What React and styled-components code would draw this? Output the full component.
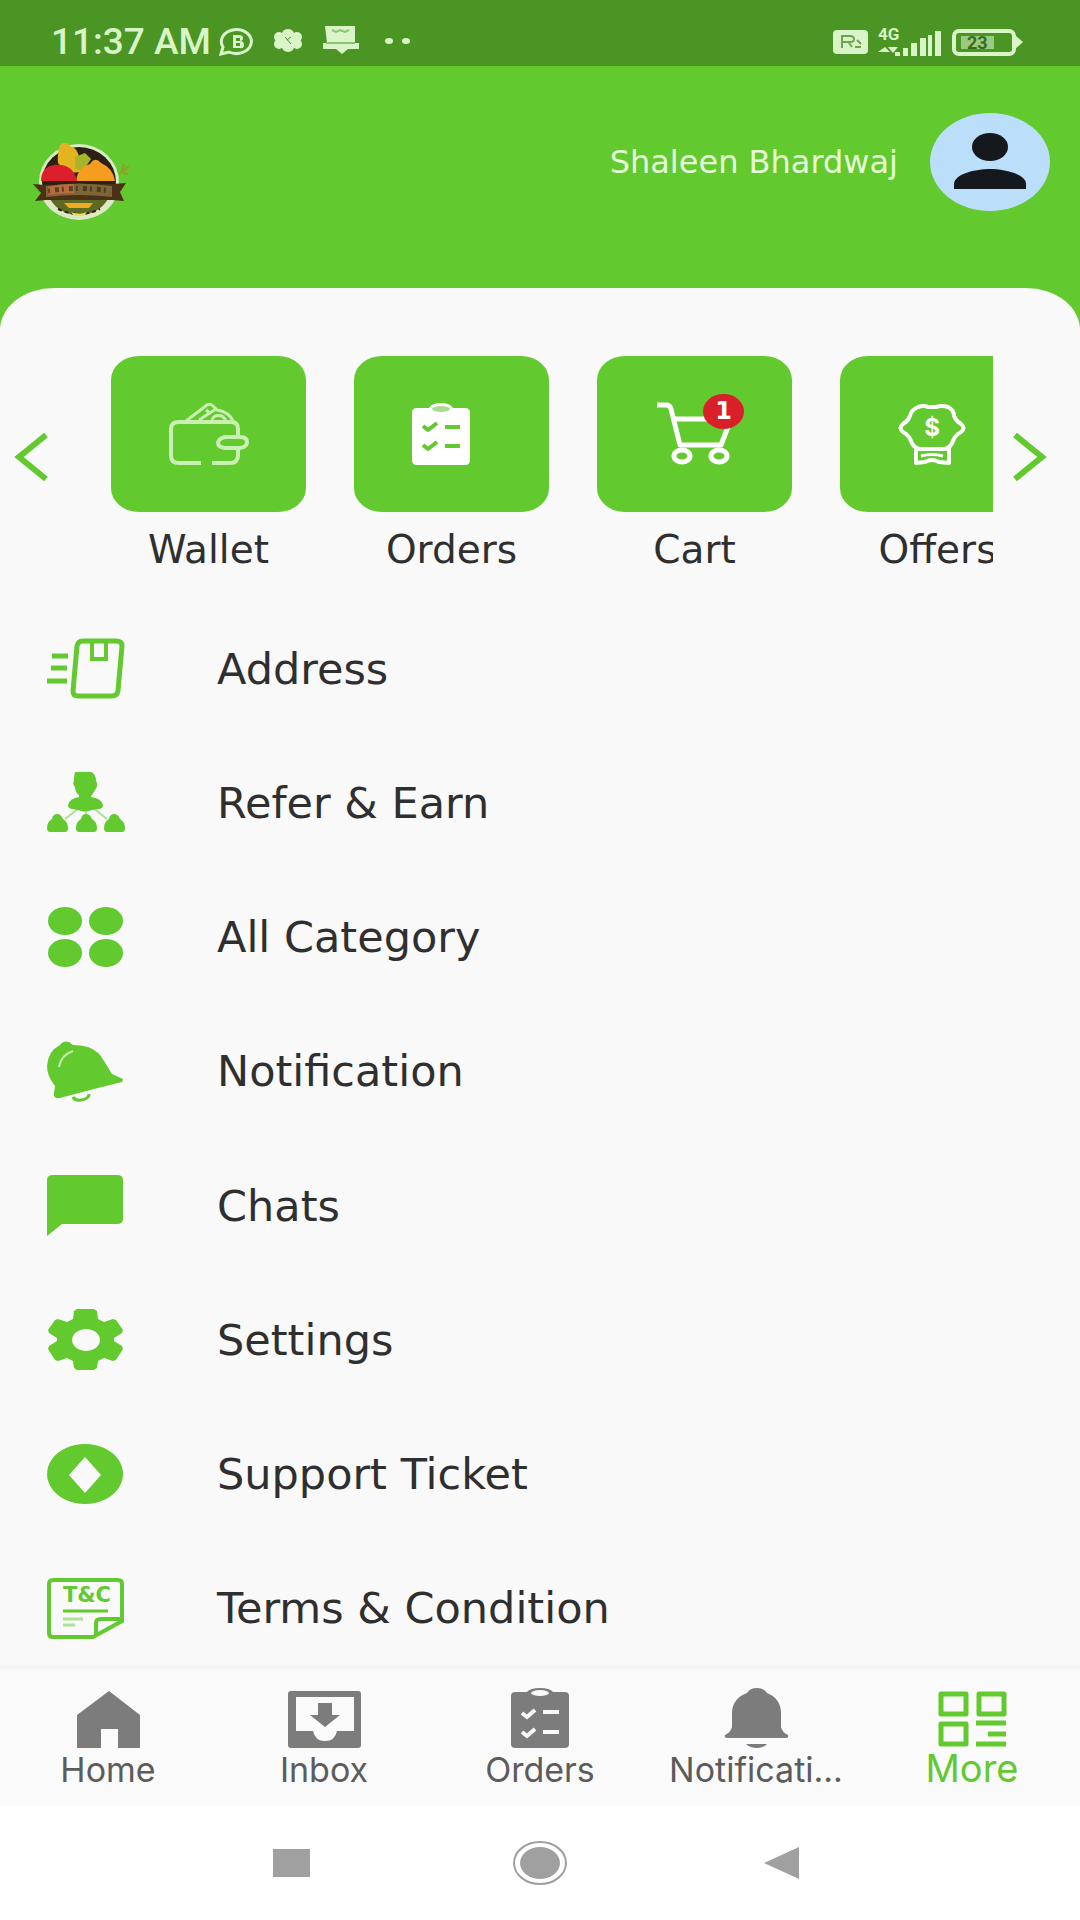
import styled, { createGlobalStyle, ThemeProvider } from 'styled-components';

const theme = {
  color: {
    primary: '#62c92f',
    primaryDark: '#4a9524',
    surface: '#f9f9f9',
    bar: '#fafafa',
    text: '#2f2f2f',
    muted: '#7c7c7c',
    pale: '#d9f5c8',
    badge: '#d9202a',
    avatar: '#bbdefb',
  },
  font: {
    base: "'DejaVu Sans', sans-serif",
    nav: "Inter, sans-serif",
    status: 'Roboto, sans-serif',
  },
};

const GlobalStyle = createGlobalStyle`
  * {
    box-sizing: border-box;
  }
  body {
    margin: 0;
    font-family: ${(props) => props.theme.font.base};
  }
  button {
    border: none;
    background: none;
    padding: 0;
    font: inherit;
    color: inherit;
    cursor: pointer;
  }
  a {
    color: inherit;
    text-decoration: none;
  }
  svg {
    display: block;
    flex: none;
  }
`;

const Page = styled.div`
  display: flex;
  flex-direction: column;
  min-height: 100vh;
  background: ${(props) => props.theme.color.primary};
`;

const StatusBar = styled.div`
  display: flex;
  justify-content: space-between;
  align-items: center;
  height: 66px;
  padding: 18px 56px 0 51px;
  background: ${(props) => props.theme.color.primaryDark};
  color: ${(props) => props.theme.color.pale};
  font-family: ${(props) => props.theme.font.status};
`;

const StatusGroup = styled.div`
  display: flex;
  align-items: center;
  gap: ${(props) => props.$gap}px;
`;

const Clock = styled.time`
  font-size: 37px;
  line-height: 36px;
  font-weight: 500;
`;

const Header = styled.header`
  display: flex;
  justify-content: space-between;
  align-items: flex-start;
  min-height: 222px;
  padding: 47px 30px 65px 33px;
`;

const LogoLink = styled.a`
  align-self: flex-end;
`;

const User = styled.a`
  display: flex;
  align-items: center;
  gap: 32px;
  color: #e6fbd9;
  font-size: 32px;
  line-height: 40px;
`;

const Avatar = styled.span`
  display: block;
  width: 120px;
  height: 98px;
  border-radius: 50%;
  overflow: hidden;
  background: ${(props) => props.theme.color.avatar};
`;

const Sheet = styled.main`
  flex: 1;
  display: flex;
  flex-direction: column;
  padding-top: 68px;
  border-radius: 54px 54px 0 0 / 42px 42px 0 0;
  background: ${(props) => props.theme.color.surface};
`;

const Carousel = styled.section`
  display: flex;
`;

const ArrowButton = styled.button`
  flex: none;
  display: flex;
  align-items: center;
  width: 87px;
  && {
    padding: 0 ${(props) => (props.$side === 'right' ? '20px' : '14px')} 14px;
  }
`;

const Track = styled.div`
  flex: 1;
  min-width: 0;
  display: flex;
  gap: 48px;
  padding-left: 24px;
  overflow: hidden;
`;

const Shortcut = styled.button`
  flex: none;
  display: flex;
  flex-direction: column;
  align-items: center;
  gap: 16px;
  width: 195px;
  && {
    color: ${(props) => props.theme.color.text};
    font-size: 39px;
    line-height: 44px;
  }
`;

const Tile = styled.span`
  position: relative;
  display: flex;
  align-items: center;
  justify-content: center;
  width: 100%;
  height: 156px;
  border-radius: 28px / 24px;
  background: ${(props) => props.theme.color.primary};
`;

const Badge = styled.span`
  position: absolute;
  top: 38px;
  right: 48px;
  width: 41px;
  height: 35px;
  border-radius: 50%;
  background: ${(props) => props.theme.color.badge};
  color: #fff;
  font-size: 24px;
  line-height: 35px;
  font-weight: bold;
  text-align: center;
`;

const Menu = styled.nav`
  flex: 1;
  display: flex;
  flex-direction: column;
  justify-content: space-between;
  gap: 24px;
  padding: 66px 47px 26px;
`;

const MenuItem = styled.a`
  display: flex;
  align-items: center;
  gap: 92px;
  height: 61px;
  color: ${(props) => props.theme.color.text};
  font-size: 43px;
  line-height: 52px;

  svg {
    color: ${(props) => props.theme.color.primary};
  }
`;

const TabBar = styled.nav`
  display: grid;
  grid-template-columns: repeat(5, 1fr);
  padding: 19px 0 14px;
  border-top: 4px solid #f4f4f4;
  background: ${(props) => props.theme.color.bar};
  font-family: ${(props) => props.theme.font.nav};
`;

const Tab = styled.a`
  display: flex;
  flex-direction: column;
  align-items: center;
  color: ${(props) => (props.$active ? props.theme.color.primary : '#5c5c5c')};
  font-size: ${(props) => (props.$active ? 38 : 34)}px;
  line-height: ${(props) => (props.$active ? 40 : 44)}px;

  svg {
    color: ${(props) => (props.$active ? props.theme.color.primary : props.theme.color.muted)};
  }
`;

const SystemBar = styled.div`
  display: flex;
  justify-content: center;
  align-items: center;
  gap: 192px;
  height: 114px;
  background: #fff;
  color: #a0a0a0;
`;

const Logo = () => (
  <svg width="98" height="80" viewBox="0 0 98 80" aria-hidden="true">
    <ellipse cx="46" cy="39" rx="40" ry="38" fill="#d8ecc8" />
    <ellipse cx="46" cy="39" rx="37" ry="35" fill="#2b2013" />
    <path d="M8 52h76c-6 16-20 24-38 24S14 68 8 52z" fill="#dfe8c4" />
    <path d="M17 56h58c-6 10-16 16-29 16S23 66 17 56z" fill="#5d6a20" />
    <path d="M27 2q6-5 10 1 8 2 9 12l3 14-15 1-9-10q-1-10 2-18z" fill="#e3b420" />
    <path d="M42 14l10-4 6 6-8 12-8-2z" fill="#a8b52c" />
    <path d="M43 38q2-14 14-17 5-8 11-1 12 5 14 18z" fill="#f59d1f" />
    <path d="M8 38q0-14 13-16 19-2 23 16z" fill="#dc1f2c" />
    <path d="M0 41l12 1 68-1 13-1-6 9 4 9-12-1H13L2 58l6-8z" fill="#4a3016" />
    <path d="M13 43q32-5 66 0v11q-33-4-66 0z" fill="#7d6538" />
    <path d="M15 44q12-3 26-3v9q-14 0-26 2z" fill="#b96b3f" />
    <path d="M15 48q32-5 62 0" fill="none" stroke="#2c2112" strokeWidth="5" strokeDasharray="2 5 4 3" opacity="0.6" />
    <path d="M31 60h29l-4 5H36z" fill="#efaa22" />
    <path d="M25 66q21 10 42 0" fill="none" stroke="#2c2112" strokeWidth="2" strokeDasharray="4 3" />
    <path d="M38 69q8 3 16 0l-3 4h-10z" fill="#e8dd62" />
    <path d="M86 31l10-8M89 27l2-6M90 30l5 1" stroke="#9a9c25" strokeWidth="2" />
  </svg>
);

const PersonIcon = () => (
  <svg width="120" height="98" viewBox="0 0 120 98" aria-hidden="true">
    <ellipse cx="60" cy="34" rx="18" ry="14" fill="#15191d" />
    <path d="M24 76v-5c0-10 22-15 36-15s36 5 36 15v5z" fill="#15191d" />
  </svg>
);

const StatusIconsLeft = () => (
  <svg width="192" height="32" viewBox="0 0 192 32" fill="currentColor" aria-hidden="true">
    <path d="M2 28l2-7a15 12 0 1 1 6 5z" fill="none" stroke="currentColor" strokeWidth="3" />
    <path d="M14 9h6q4 0 4 3t-3 3q4 0 4 4t-4 3h-7zM17 12v3h4v-3zM17 17v3h4v-3z" />
    <ellipse cx="69" cy="8" rx="6" ry="5" />
    <ellipse cx="69" cy="21" rx="6" ry="5" />
    <ellipse cx="60" cy="11" rx="5" ry="5" />
    <ellipse cx="78" cy="11" rx="5" ry="5" />
    <ellipse cx="60" cy="18" rx="5" ry="5" />
    <ellipse cx="78" cy="18" rx="5" ry="5" />
    <path d="M62 9h14v12H62z" />
    <path d="M66 11l6 7M72 11l-4 3" stroke="#4a9524" strokeWidth="1" />
    <path d="M106 0h30v17h4v6h-11l-6 5-6-5h-13v-6h4z" />
    <path d="M107 17h29M113 4l4 2 4-2 5 2 4-2" fill="none" stroke="#8fc475" strokeWidth="2" />
    <ellipse cx="170" cy="15" rx="4" ry="3" />
    <ellipse cx="187" cy="15" rx="4" ry="3" />
  </svg>
);

const SimIcon = () => (
  <svg width="35" height="26" viewBox="0 0 35 26" aria-hidden="true">
    <rect x="0" y="1" width="35" height="24" rx="4" fill="currentColor" />
    <path d="M9 19V7h8q4 0 4 3t-4 3H9M16 14l3 4M22 18h6M24 11l4 4" fill="none" stroke="#6da350" strokeWidth="2" />
  </svg>
);

const SignalIcon = () => (
  <svg width="64" height="40" viewBox="0 -6 64 40" fill="currentColor" aria-hidden="true">
    <text x="0" y="12" fontFamily="Roboto, sans-serif" fontSize="17" fontWeight="bold">4G</text>
    <path d="M0 24l7-5 5 5zM10 19h10l-5 6z" />
    <path d="M17 24h5v4h-5zM25 20h5v8h-5zM33 15h6v13h-6zM42 10h6v18h-6zM50 7h4v21h-4zM57 3h6v25h-6z" />
  </svg>
);

const BatteryIcon = () => (
  <svg width="72" height="28" viewBox="0 0 72 28" aria-hidden="true">
    <rect x="2" y="3" width="60" height="23" rx="5" fill="none" stroke="currentColor" strokeWidth="4" />
    <path d="M63 7l8 7-8 7z" fill="currentColor" />
    <path d="M9 8h33v13H9z" fill="#9cc983" />
    <text x="15" y="21" fontFamily="Roboto, sans-serif" fontSize="18" fontWeight="bold" fill="#356f18">23</text>
  </svg>
);

const Chevron = ({ d }) => (
  <svg width="34" height="50" viewBox="0 0 34 50" fill="none" stroke="#62c92f" strokeWidth="6" aria-hidden="true">
    <path d={d} />
  </svg>
);

// shortcut icons share one 80x64 canvas
const TileIcon = ({ children }) => (
  <svg width="80" height="64" viewBox="0 0 80 64" fill="none" stroke="#fff" strokeWidth="4" strokeLinejoin="round" aria-hidden="true">
    {children}
  </svg>
);

const WalletIcon = () => (
  <TileIcon>
    <g stroke="#c9f0b2">
      <path d="M69 33V27q0-7-7-7H10q-8 0-8 7v27q0 7 8 7h22M43 61h18q8 0 8-8v-7" />
      <path d="M56 35h15q7 0 7 5t-7 6H56q-7-1-7-5t7-6z" />
      <path d="M17 19L38 3q3-2 6 1l4 4q12 2 16 11M30 18L47 7M43 18q2-6 10-4l4 4M37 8l5 4" strokeWidth="3" />
    </g>
  </TileIcon>
);

const OrdersIcon = () => (
  <TileIcon>
    <path d="M5 6h12q3-5 12-5t12 5h12q5 0 5 5v47q0 5-5 5H5q-5 0-5-5V11q0-5 5-5z" fill="#fff" stroke="none" />
    <ellipse cx="29" cy="7" rx="9" ry="3" fill="#a8dd8b" stroke="none" />
    <path d="M11 24l5 4 9-7M11 43l5 4 9-7M33 25h15M33 44h15" stroke="#62c92f" />
  </TileIcon>
);

const CartIcon = () => (
  <TileIcon>
    <path d="M2 3h9q4 0 5 4l9 36h41l10-26H19" strokeWidth="5" />
    <ellipse cx="27" cy="54" rx="8" ry="6" strokeWidth="5" />
    <ellipse cx="64" cy="54" rx="8" ry="6" strokeWidth="5" />
  </TileIcon>
);

const OffersIcon = () => (
  <TileIcon>
    <path d="M20 5q6-2 10 0h8q6-2 12 0 6 3 6 9 2 5 7 8 5 4 0 8-6 3-8 9-2 6-8 8H21q-6-2-8-8-2-6-8-9-5-4 0-8 5-3 7-8 1-6 8-9z" />
    <path d="M18 46v15l9-1q7-4 14 0l10 1V46" />
    <path d="M23 54q11-3 22 0" strokeWidth="3" />
    <text x="34" y="34" fill="#fff" stroke="none" fontFamily="Inter, sans-serif" fontSize="24" fontWeight="bold" textAnchor="middle">$</text>
  </TileIcon>
);

const MenuIcon = ({ children }) => (
  <svg width="78" height="61" viewBox="0 0 78 61" fill="currentColor" aria-hidden="true">
    {children}
  </svg>
);

const AddressIcon = () => (
  <MenuIcon>
    <g fill="none" stroke="currentColor" strokeWidth="5">
      <path d="M36 3h33q6 0 6 5l-4 45q-1 5-6 5H31q-5 0-5-5l4-45q1-5 6-5z" />
      <path d="M45 4v17h14V4" strokeWidth="4" />
      <path d="M5 18h16M4 30h16M0 43h20" />
    </g>
  </MenuIcon>
);

const ReferIcon = () => (
  <MenuIcon>
    <path d="M28 0h16q5 2 5 9 3 4-1 9-2 4-4 6v1q10 1 12 8 0 4-5 4l-6 1q-7 3-14 0l-5-1q-5 0-5-4 2-7 11-8v-2q-4-3-4-8-3-3-1-6 0-6 1-9z" />
    <path d="M32 36L18 47M39 36v9M46 36l14 11" fill="none" stroke="currentColor" strokeWidth="2" opacity="0.5" />
    <path d="M10 42q4 0 6 5 5 3 5 9 0 4-3 4H3q-3 0-3-4 0-6 5-9 1-5 5-5zM39 42q4 0 6 5 5 3 5 9 0 4-3 4H32q-3 0-3-4 0-6 5-9 1-5 5-5zM67 42q4 0 6 5 5 3 5 9 0 4-3 4H60q-3 0-3-4 0-6 5-9 1-5 5-5z" />
  </MenuIcon>
);

const CategoryIcon = () => (
  <MenuIcon>
    <ellipse cx="18" cy="14" rx="17" ry="14" />
    <ellipse cx="59" cy="14" rx="17" ry="14" />
    <ellipse cx="18" cy="46" rx="17" ry="14" />
    <ellipse cx="59" cy="46" rx="17" ry="14" />
  </MenuIcon>
);

const NotificationIcon = () => (
  <MenuIcon>
    <path d="M13 4q3-5 9-3l4 3q8 0 15 2 11 4 16 14l8 13 11 5-1 3-28 7-34 9q-7 1-6-5l1-7Q0 35 0 25q1-15 13-21z" />
    <path d="M12 26q2-12 14-16" fill="none" stroke="#c3ecac" strokeWidth="2" />
    <path d="M26 56q2 4 8 3 8-1 8-6" fill="none" stroke="currentColor" strokeWidth="3" />
  </MenuIcon>
);

const ChatsIcon = () => (
  <MenuIcon>
    <path d="M6 0h64q6 0 6 5v39q0 5-6 5H15L0 61V5q0-5 6-5z" />
  </MenuIcon>
);

const SettingsIcon = () => (
  <MenuIcon>
    <path
      fillRule="evenodd"
      d="M30 0h17l3 2 1 8 6 3 9-3 3 1 7 10-1 3-8 5v3l8 5 1 3-7 11-3 1-9-3-6 3-1 7-3 2H30l-3-2-1-7-6-3-9 3-3-1-7-11 1-3 8-5v-3l-8-5-1-3 7-10 3-1 9 3 6-3 1-8zM39 20a14 11 0 1 0 .1 0z"
    />
  </MenuIcon>
);

const SupportIcon = () => (
  <MenuIcon>
    <path fillRule="evenodd" d="M38 0a38 30 0 1 0 .1 0zM38 13l16 18-16 18-16-18z" />
  </MenuIcon>
);

const TermsIcon = () => (
  <MenuIcon>
    <g fill="none" stroke="currentColor" strokeWidth="4">
      <path d="M6 2h65q4 0 4 4v37L46 59H6q-4 0-4-4V6q0-4 4-4z" />
      <path d="M49 57V45q0-4 5-4h21" />
      <path d="M16 33h45" strokeWidth="3" />
      <path d="M16 41h20M16 47h12" strokeWidth="3" opacity="0.5" />
    </g>
    <text x="40" y="24" fontFamily="'DejaVu Sans', sans-serif" fontSize="21" fontWeight="bold" textAnchor="middle">T&amp;C</text>
  </MenuIcon>
);

const TabIcon = ({ children }) => (
  <svg width="74" height="60" viewBox="0 0 74 60" fill="currentColor" aria-hidden="true">
    {children}
  </svg>
);

const tabIcons = {
  home: (
    <TabIcon>
      <path d="M38 3l31 24v33H47V41H30v19H6V27z" />
    </TabIcon>
  ),
  inbox: (
    <TabIcon>
      <path fillRule="evenodd" d="M4 3h67q3 0 3 3v51q0 3-3 3H4q-3 0-3-3V6q0-3 3-3zM9 9v34h17q2 10 12 10t12-10h17V9z" />
      <path d="M31 15h14v12h8L38 39 23 27h8z" />
    </TabIcon>
  ),
  orders: (
    <TabIcon>
      <path d="M12 4h12q3-4 13-4t13 4h12q4 0 4 4v48q0 4-4 4H12q-4 0-4-4V8q0-4 4-4z" />
      <ellipse cx="37" cy="5" rx="9" ry="3" fill="#fafafa" />
      <path d="M19 25l5 4 8-7M19 44l5 4 8-7M40 24h16M40 44h16" fill="none" stroke="#fafafa" strokeWidth="4" />
    </TabIcon>
  ),
  notification: (
    <TabIcon>
      <path d="M38 0q7 0 10 5 13 5 14 19v15q1 5 7 8 1 3-2 3H8q-3 0-2-3 6-3 7-8V24q1-14 15-19 3-5 10-5z" />
      <path d="M27 56h21q-3 4-10 4t-11-4z" />
    </TabIcon>
  ),
  more: (
    <TabIcon>
      <g fill="none" stroke="currentColor" strokeWidth="5" strokeLinejoin="round">
        <path d="M6 6h25v20H6zM44 6h25v20H44zM6 36h25v20H6z" />
        <path d="M41 35h30M53 46h18M41 56h30" />
      </g>
    </TabIcon>
  ),
};

const shortcuts = [
  { label: 'Wallet', Icon: WalletIcon },
  { label: 'Orders', Icon: OrdersIcon },
  { label: 'Cart', Icon: CartIcon, count: 1 },
  { label: 'Offers', Icon: OffersIcon },
];

const menuItems = [
  { label: 'Address', Icon: AddressIcon },
  { label: 'Refer & Earn', Icon: ReferIcon },
  { label: 'All Category', Icon: CategoryIcon },
  { label: 'Notification', Icon: NotificationIcon },
  { label: 'Chats', Icon: ChatsIcon },
  { label: 'Settings', Icon: SettingsIcon },
  { label: 'Support Ticket', Icon: SupportIcon },
  { label: 'Terms & Condition', Icon: TermsIcon },
];

const tabs = [
  { id: 'home', label: 'Home' },
  { id: 'inbox', label: 'Inbox' },
  { id: 'orders', label: 'Orders' },
  { id: 'notification', label: 'Notificati...' },
  { id: 'more', label: 'More', active: true },
];

export default function App() {
  return (
    <ThemeProvider theme={theme}>
      <GlobalStyle />
      <Page>
        <StatusBar>
          <StatusGroup $gap={8}>
            <Clock>11:37 AM</Clock>
            <StatusIconsLeft />
          </StatusGroup>
          <StatusGroup $gap={10}>
            <SimIcon />
            <SignalIcon />
            <BatteryIcon />
          </StatusGroup>
        </StatusBar>

        <Header>
          <LogoLink href="#home" aria-label="Home">
            <Logo />
          </LogoLink>
          <User href="#profile">
            Shaleen Bhardwaj
            <Avatar>
              <PersonIcon />
            </Avatar>
          </User>
        </Header>

        <Sheet>
          <Carousel>
            <ArrowButton $side="left" aria-label="Previous">
              <Chevron d="M32 3L5 25l27 22" />
            </ArrowButton>
            <Track>
              {shortcuts.map(({ label, Icon, count }) => (
                <Shortcut key={label}>
                  <Tile>
                    <Icon />
                    {count && <Badge>{count}</Badge>}
                  </Tile>
                  {label}
                </Shortcut>
              ))}
            </Track>
            <ArrowButton $side="right" aria-label="Next">
              <Chevron d="M2 3l27 22L2 47" />
            </ArrowButton>
          </Carousel>

          <Menu>
            {menuItems.map(({ label, Icon }) => (
              <MenuItem key={label} href="#">
                <Icon />
                {label}
              </MenuItem>
            ))}
          </Menu>
        </Sheet>

        <TabBar>
          {tabs.map(({ id, label, active }) => (
            <Tab key={id} href={`#${id}`} $active={active}>
              {tabIcons[id]}
              {label}
            </Tab>
          ))}
        </TabBar>

        <SystemBar>
          <button aria-label="Recent apps">
            <svg width="54" height="44" viewBox="0 0 54 44" fill="currentColor">
              <path d="M6 8h37v28H6z" />
            </svg>
          </button>
          <button aria-label="Home screen">
            <svg width="54" height="44" viewBox="0 0 54 44" fill="currentColor">
              <ellipse cx="27" cy="22" rx="26" ry="21" fill="none" stroke="currentColor" strokeWidth="2" />
              <ellipse cx="27" cy="22" rx="20" ry="16" />
            </svg>
          </button>
          <button aria-label="Back">
            <svg width="54" height="44" viewBox="0 0 54 44" fill="currentColor">
              <path d="M5 22L40 6v32z" />
            </svg>
          </button>
        </SystemBar>
      </Page>
    </ThemeProvider>
  );
}
